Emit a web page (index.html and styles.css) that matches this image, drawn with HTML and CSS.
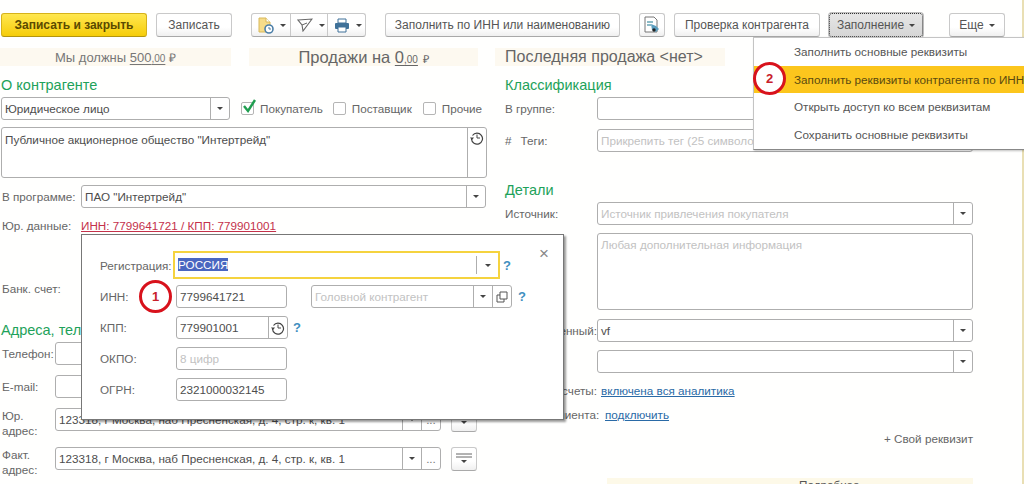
FILE: index.html
```html
<!DOCTYPE html>
<html lang="ru">
<head>
<meta charset="utf-8">
<title>Контрагент</title>
<link rel="stylesheet" href="styles.css">
</head>
<body>
<div class="page">
  <div class="toolbar">
    <button class="btn primary w146">Записать и закрыть</button>
    <button class="btn w76">Записать</button>
    <div class="btn-group">
      <span class="seg s39">
        <svg width="16" height="17" viewBox="0 0 16 17"><path d="M1 1h7l4 4v10H1z" fill="#f6dc8a" stroke="#d8b85a"/><path d="M8 1v4h4" fill="#fff" stroke="#d8b85a"/><circle cx="11" cy="12" r="4" fill="#fff" stroke="#4c7fa8" stroke-width="1.6"/><path d="M11 10v2h2" fill="none" stroke="#4c7fa8"/></svg>
        <i class="caret"></i>
      </span>
      <span class="seg s38">
        <svg width="16" height="14" viewBox="0 0 16 14"><path d="M1 2l14-1-9 12-1-6z" fill="none" stroke="#666" stroke-width="1.1"/><path d="M5 7l5-2" stroke="#666"/></svg>
        <i class="caret"></i>
      </span>
      <span class="seg s38 last">
        <svg width="16" height="15" viewBox="0 0 16 15"><path d="M4 1h8v4H4z" fill="#fff" stroke="#3f7199"/><rect x="1" y="5" width="14" height="6" rx="1" fill="#3f7199"/><path d="M4 9h8v5H4z" fill="#fff" stroke="#3f7199"/></svg>
        <i class="caret"></i>
      </span>
    </div>
    <button class="btn w235 ml19">Заполнить по ИНН или наименованию</button>
    <button class="btn icon w26 ml19">
      <svg width="18" height="18" viewBox="0 0 18 18"><path d="M2 1h9l3 3v12H2z" fill="#fff" stroke="#777"/><path d="M4 6h6M4 9h4" stroke="#68a5b5" stroke-width="1.5"/><path d="M8 8l5 2 3 3-3 3-4-2z" fill="#5c9fc0"/><circle cx="11" cy="14" r="1.7" fill="#222"/></svg>
    </button>
    <button class="btn w146 ml9">Проверка контрагента</button>
    <button class="btn active ml9">Заполнение <i class="caret"></i></button>
    <button class="btn w56 ml26">Еще <i class="caret"></i></button>
  </div>

  <div class="banners">
    <div class="banner b1"><span>Мы должны <span class="sum">500<small>,00</small></span> <span class="rub">₽</span></span></div>
    <div class="banner b2"><span>Продажи на <span class="sum">0<small>,00</small></span> <span class="rub small">₽</span></span></div>
    <div class="banner b3">Последняя продажа &lt;нет&gt;</div>
  </div>

  <div class="columns">
    <section class="col-left">
      <h2 class="title t-first">О контрагенте</h2>
      <div class="row r-type">
        <div class="field f-type"><span class="val">Юридическое лицо</span><span class="cell"><i class="caret"></i></span></div>
        <label class="check c1"><span class="box"><svg width="17" height="16" viewBox="0 0 17 16"><path d="M3 7l4 5 7-11" fill="none" stroke="#1f9e4f" stroke-width="2.4"/></svg></span>Покупатель</label>
        <label class="check c2"><span class="box"></span>Поставщик</label>
        <label class="check c3"><span class="box"></span>Прочие</label>
      </div>
      <div class="field area f-name"><span class="val">Публичное акционерное общество "Интертрейд"</span>
        <span class="cell tall">
          <svg class="hist" width="14" height="14" viewBox="0 0 14 14"><use href="#hist"/></svg>
        </span>
      </div>
      <div class="row r-prog">
        <span class="lab l79">В программе:</span>
        <div class="field f-prog"><span class="val">ПАО "Интертрейд"</span><span class="cell"><i class="caret"></i></span></div>
      </div>
      <div class="row r-legal">
        <span class="lab l79">Юр. данные:</span>
        <a class="danger">ИНН: 7799641721 / КПП: 779901001</a>
      </div>
      <div class="row r-bank"><span class="lab l79">Банк. счет:</span></div>

      <h2 class="title t-addr">Адреса, телефоны</h2>
      <div class="row r-phone"><span class="lab l54">Телефон:</span><div class="field f-addr"></div></div>
      <div class="row r-mail"><span class="lab l54">E-mail:</span><div class="field f-addr"></div></div>
      <div class="row r-yur">
        <span class="lab l54 two">Юр. адрес:</span>
        <div class="field f-addr"><span class="val">123318, г Москва, наб Пресненская, д. 4, стр. к, кв. 1</span><span class="cell"><i class="caret"></i></span><span class="cell dots">...</span></div>
        <button class="btn icon menu-btn"><svg width="18" height="12" viewBox="0 0 18 12"><path d="M1 1h16M1 4h16" stroke="#666"/><path d="M6 7h6l-3 3z" fill="#444"/></svg></button>
      </div>
      <div class="row r-fact">
        <span class="lab l54 two">Факт. адрес:</span>
        <div class="field f-addr"><span class="val">123318, г Москва, наб Пресненская, д. 4, стр. к, кв. 1</span><span class="cell"><i class="caret"></i></span><span class="cell dots">...</span></div>
        <button class="btn icon menu-btn"><svg width="18" height="12" viewBox="0 0 18 12"><path d="M1 1h16M1 4h16" stroke="#666"/><path d="M6 7h6l-3 3z" fill="#444"/></svg></button>
      </div>
    </section>

    <section class="col-right">
      <h2 class="title t-first">Классификация</h2>
      <div class="row r-type"><span class="lab l92">В группе:</span><div class="field f-right"></div></div>
      <div class="row r-tags"><span class="lab l92"><b class="hash">#</b>Теги:</span><div class="field f-right"><span class="val hint">Прикрепить тег (25 символов)</span></div></div>
      <h2 class="title t-det">Детали</h2>
      <div class="row r-src"><span class="lab l92">Источник:</span><div class="field f-right"><span class="val hint">Источник привлечения покупателя</span><span class="cell"><i class="caret"></i></span></div></div>
      <div class="row r-note"><span class="lab l92"></span><div class="field area f-right f-note"><span class="val hint">Любая дополнительная информация</span></div></div>
      <div class="row r-resp"><span class="lab l92 rt">Ответственный:</span><div class="field f-right"><span class="val">vf</span><span class="cell"><i class="caret"></i></span></div></div>
      <div class="row r-second"><span class="lab l92"></span><div class="field f-right"><span class="cell push"><i class="caret"></i></span></div></div>
      <div class="row r-l1"><span class="lab rt l92 nowrap">Взаиморасчеты:</span><a class="link l-a">включена вся аналитика</a></div>
      <div class="row r-l2"><span class="lab rt l92 nowrap">Кабинет клиента:</span><a class="link l-b">подключить</a></div>
      <div class="row r-own"><span class="own">+ Свой реквизит</span></div>
      <div class="foot-banner">Подробнее</div>
    </section>
  </div>
  <div class="edge"></div>

  <!-- Выпадающее меню -->
  <div class="menu">
    <div class="item">Заполнить основные реквизиты</div>
    <div class="item on">Заполнить реквизиты контрагента по ИНН</div>
    <div class="item">Открыть доступ ко всем реквизитам</div>
    <div class="item">Сохранить основные реквизиты</div>
  </div>
  <span class="badge b-two">2</span>

  <!-- Всплывающее окно -->
  <div class="popup">
    <span class="close">×</span>
    <div class="p-row pr1">
      <span class="plab">Регистрация:</span>
      <div class="field focus"><span class="val"><span class="sel">РОССИЯ</span></span><span class="cell"><i class="caret"></i></span></div>
      <span class="q q-r">?</span>
    </div>
    <div class="p-row">
      <span class="plab">ИНН:</span>
      <div class="field f-code"><span class="val">7799641721</span></div>
      <div class="field f-head"><span class="val hint">Головной контрагент</span><span class="cell"><i class="caret"></i></span><span class="cell">
        <svg width="12" height="12" viewBox="0 0 12 12"><path d="M4 1h7v7H4z M1 4h3M1 4v7h7V8" fill="none" stroke="#555"/></svg></span></div>
      <span class="q">?</span>
    </div>
    <div class="p-row">
      <span class="plab">КПП:</span>
      <div class="field f-code f-kpp"><span class="val">779901001</span><span class="cell">
        <svg class="hist" width="14" height="14" viewBox="0 0 14 14"><use href="#hist"/></svg></span></div>
      <span class="q q-k">?</span>
    </div>
    <div class="p-row">
      <span class="plab">ОКПО:</span>
      <div class="field f-code"><span class="val hint">8 цифр</span></div>
    </div>
    <div class="p-row">
      <span class="plab">ОГРН:</span>
      <div class="field f-code"><span class="val">2321000032145</span></div>
    </div>
  </div>
  <span class="badge b-one">1</span>

  <svg class="defs" width="0" height="0"><symbol id="hist" viewBox="0 0 14 14"><path d="M2.5 4.5A5.5 5.5 0 1 1 1.5 8" fill="none" stroke="#444" stroke-width="1.2"/><path d="M0 6.5h4L2 9z" fill="#444"/><path d="M7 3.5V7h3" fill="none" stroke="#444"/></symbol></svg>
</div>
</body>
</html>
```

FILE: styles.css
```css
* { box-sizing: border-box; }
html, body { margin: 0; padding: 0; background: #fff; }
body { font: 11.7px "Liberation Sans", Arial, sans-serif; color: #555; }
.page { position: relative; width: 1024px; height: 484px; overflow: hidden; background: #fffffe; }
.defs { position: absolute; }

.toolbar { display: flex; align-items: flex-start; gap: 9px; height: 48px; padding: 13px 0 0 1px; }
.btn { display: inline-flex; align-items: center; justify-content: center; gap: 5px; height: 24px; padding: 0 6px; font: inherit; font-size: 12px; white-space: nowrap; color: #555; background: linear-gradient(#fff 60%, #f0f0f0); border: 1px solid #c9c9c9; border-bottom-color: #a9a9a9; border-radius: 3px; }
.primary { font-weight: 700; color: #5b4a00; background: linear-gradient(#ffe74f, #f6cd0a); border-color: #d6b21a; border-bottom-color: #b3950f; }
.w146 { width: 146px; } .w76 { width: 76px; } .w235 { width: 235px; } .w26 { width: 26px; padding: 0; } .w56 { width: 56px; }
.ml19 { margin-left: 10px; } .ml9 { margin-left: 0; } .ml26 { margin-left: 17px; }
.toolbar .w76 { margin-right: 10px; }
.active { width: 94px; background: linear-gradient(#e6e6e6, #d6d6d6); border: 1px dotted #333; box-shadow: 0 0 0 1px #bdbdbd; }
.btn-group { display: flex; height: 24px; border: 1px solid #c9c9c9; border-bottom-color: #a9a9a9; border-radius: 3px; background: linear-gradient(#fff 60%, #f0f0f0); }
.seg { display: flex; align-items: center; gap: 6px; padding-left: 6px; border-right: 1px solid #c9c9c9; }
.seg.last { border-right: 0; }
.s39 { width: 39px; } .s38 { width: 37px; }
.caret { display: inline-block; width: 0; height: 0; border: 3px solid transparent; border-top: 3px solid #444; border-bottom: 0; }

.banners { display: flex; height: 18px; font-size: 13px; }
.banner { display: flex; align-items: center; justify-content: center; background: #fdf9f0; color: #777; white-space: pre; }
.b1 { width: 231px; }
.b2 { width: 229px; margin-left: 18px; font-size: 16.5px; color: #666; }
.b3 { width: 230px; margin-left: 17px; font-size: 16px; color: #666; justify-content: flex-start; padding-left: 10px; }
.sum { text-decoration: underline; text-underline-offset: 2px; }
small { font-size: 10px; }
.rub { font-size: 12px; }
.rub.small { font-size: 11px; }

.columns { display: grid; grid-template-columns: 505px 1fr; }
.col-left { padding-left: 1px; }
.title { margin: 0; font-size: 14.5px; font-weight: 400; color: #1ea25a; line-height: 18px; white-space: nowrap; }
.t-first { margin-top: 10px; }
.row { display: flex; align-items: center; }
.lab { flex: none; color: #666; }
.l79 { width: 80px; padding-left: 1px; }
.l54 { width: 54px; padding-left: 1px; }
.l92 { width: 92px; }
.two { align-self: flex-start; width: 54px; line-height: 15px; }
.field { position: relative; display: flex; align-items: stretch; height: 23px; background: #fff; border: 1px solid #aeaeae; border-radius: 3px; }
.val { flex: 1; min-width: 0; padding: 0 3px; line-height: 21px; white-space: nowrap; overflow: hidden; color: #4d4d4d; }
.hint { color: #c2c2c2; }
.cell { flex: none; display: flex; align-items: center; justify-content: center; width: 19px; border-left: 1px solid #aeaeae; }
.cell.push { margin-left: auto; }
.cell.dots { width: 19px; color: #777; }
.cell.tall { width: 19px; align-items: flex-start; padding-top: 3px; }
.r-type { margin-top: 3px; }
.f-type { width: 229px; }
.check { display: flex; align-items: center; gap: 6px; color: #666; white-space: nowrap; }
.c1 { margin-left: 11px; }
.c2 { margin-left: 10px; }
.c3 { margin-left: 11px; }
.box { display: block; width: 13px; height: 13px; border: 1px solid #b5b5b5; border-radius: 2px; background: #fff; position: relative; }
.box svg { position: absolute; left: -1px; top: -4px; }
.area { height: 52px; align-items: stretch; }
.f-name { width: 486px; height: 51px; margin-top: 7px; }
.f-name .val { line-height: 18px; padding-top: 3px; }
.r-prog { margin-top: 7px; }
.f-prog { width: 405px; }
.r-legal { margin-top: 10px; height: 15px; }
.danger { color: #c4314b; text-decoration: underline; }
.r-bank { margin-top: 48px; height: 15px; }
.t-addr { margin-top: 25px; }
.r-phone { margin-top: 3px; }
.r-mail { margin-top: 10px; }
.r-yur { margin-top: 10px; gap: 0; height: 23px; }
.r-fact { margin-top: 16px; height: 23px; }
.f-addr { width: 386px; }
.menu-btn { width: 26px; height: 24px; padding: 0; margin-left: 10px; }

.r-tags { margin-top: 9px; }
.hash { font-weight: 400; margin-right: 9px; }
.f-right { flex: none; width: 376px; }
.t-det { margin-top: 29px; }
.r-src { margin-top: 3px; }
.r-note { margin-top: 8px; }
.f-note { height: 77px; }
.f-note .val { padding-top: 0; }
.r-resp { margin-top: 9px; }
.r-second { margin-top: 8px; }
.rt { text-align: right; }
.nowrap { white-space: nowrap; }
.r-l1 { margin-top: 10px; height: 15px; }
.r-l2 { margin-top: 9px; height: 15px; }
.link { color: #2a6aa6; text-decoration: underline; }
.l-a { margin-left: 4px; }
.l-b { margin-left: 8px; }
.r-own { margin-top: 9px; height: 15px; width: 468px; justify-content: flex-end; }
.own { color: #666; }
.foot-banner { width: 366px; height: 22px; margin: 32px 0 0 102px; padding-left: 192px; background: #fdf9e8; line-height: 14px; color: #555; white-space: nowrap; }
.edge { position: absolute; top: 0; bottom: 0; left: 1022px; width: 2px; background: #e9dfb4; }

.menu { position: absolute; left: 753px; top: 37px; width: 275px; height: 113px; background: #fff; border: 1px solid #c4c4c4; border-bottom-color: #888; box-shadow: 1px 1px 2px rgba(0,0,0,.25); }
.item { display: flex; align-items: center; height: 27.5px; padding-left: 40px; color: #555; white-space: nowrap; }
.item.on { background: #fcc61d; color: #5a4a10; }

.badge { position: absolute; display: flex; align-items: center; justify-content: center; width: 33px; height: 33px; background: #fff; border: 3px solid #d8121c; border-radius: 50%; font-weight: 700; font-size: 13px; color: #c8202a; }
.b-two { left: 753px; top: 62px; }
.b-one { left: 139px; top: 280px; }

.popup { position: absolute; left: 81px; top: 234px; width: 483px; height: 186px; padding: 16px 0 0 18px; background: #fff; border: 1px solid #777; box-shadow: 2px 2px 2px rgba(0,0,0,.4); display: flex; flex-direction: column; gap: 8px; }
.close { position: absolute; right: 14px; top: 12px; font-size: 17px; line-height: 14px; color: #888; }
.p-row { display: flex; align-items: center; height: 23px; }
.pr1 { height: 28px; margin-bottom: -2px; }
.plab { flex: none; width: 76px; color: #666; }
.focus { width: 327px; height: 28px; margin-left: -3px; border: 2px solid #f5d33f; border-radius: 0; }
.focus .val { line-height: 24px; padding-left: 3px; }
.focus .cell { margin: 3px 0; width: 22px; }
.sel { background: #4a66c0; color: #fff; }
.f-code { width: 111px; }
.f-kpp { width: 112px; }
.f-head { width: 201px; margin-left: 24px; }
.f-head .cell { width: 19px; }
.q { flex: none; margin-left: 6px; font-size: 13px; font-weight: 700; color: #3f8fc0; }
.q-k { margin-left: 5px; }
.q-r { margin-left: 3px; }
```
